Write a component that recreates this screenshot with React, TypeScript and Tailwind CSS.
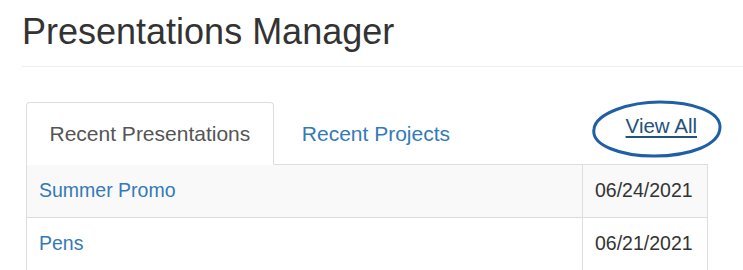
const rows = [
  { name: "Summer Promo", date: "06/24/2021" },
  { name: "Pens", date: "06/21/2021" }
];

export default function App() {
  return (
    <div className="h-[270px] w-[743px] overflow-hidden bg-white pl-[22px] font-['Liberation_Sans',Arial,sans-serif]">
      <h1 className="mt-[12px] text-[36px] leading-[40px] font-normal text-[#333]">Presentations Manager</h1>
      <hr className="mt-[14px] border-0 border-t border-[#eee]" />

      <div className="ml-[4px] mt-[35px] w-[682px]">
        <div className="flex border-b border-[#ddd]">
          <div className="-mb-px flex h-[63px] items-center rounded-t-[4px] border border-[#ddd] border-b-transparent bg-white px-[22.5px] text-[21px] text-[#555]">
            Recent Presentations
          </div>
          <a href="#" className="-mb-px ml-[2px] flex h-[63px] items-center border border-transparent px-[25px] text-[21px] text-[#337ab7]">
            Recent Projects
          </a>
          <div className="relative ml-auto mr-[11px] mt-[12px] self-start">
            <a href="#" className="text-[20.5px] leading-[24px] text-[#23527c] underline underline-offset-[3px]">
              View All
            </a>
            <svg className="absolute left-[-34px] top-[-15px]" width="130" height="60" viewBox="0 0 130 60">
              <path
                d="M2 30 C 4 14, 38 3, 68 3 C 102 3, 128 13, 128 28 C 128 46, 98 57, 62 57 C 28 57, -1 46, 2 30 Z"
                fill="none"
                stroke="#1f5fa6"
                strokeWidth="3"
              />
            </svg>
          </div>
        </div>

        <div className="border-x border-[#ddd]">
          {rows.map((row, i) => (
            <div key={row.name} className={`flex h-[53px] border-b border-[#ddd] text-[19.5px] ${i === 0 ? "bg-[#f9f9f9]" : "bg-white"}`}>
              <div className="flex flex-1 items-center pl-[12px]">
                <a href="#" className="text-[#337ab7]">{row.name}</a>
              </div>
              <div className="flex w-[125px] items-center border-l border-[#ddd] pl-[12px] text-[#333]">{row.date}</div>
            </div>
          ))}
        </div>
      </div>
    </div>
  );
}
